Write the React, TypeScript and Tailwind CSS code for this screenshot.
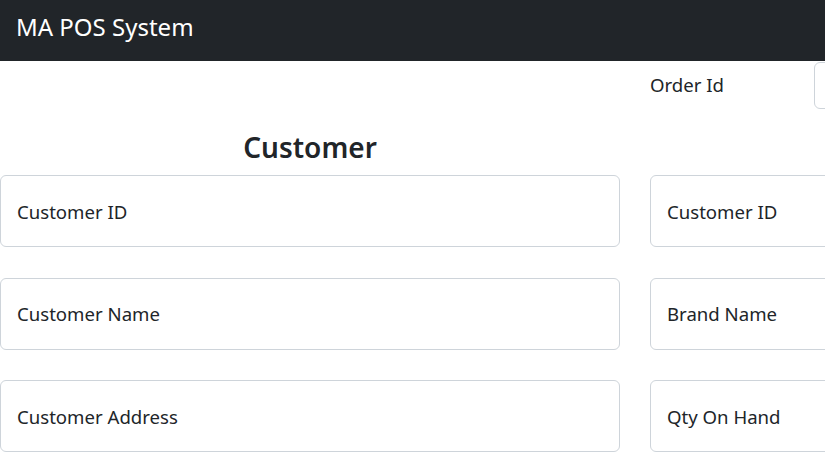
import React from "react";

const font = { fontFamily: '"Noto Sans", "Open Sans", sans-serif' };

function Field({ placeholder }: { placeholder: string }) {
  return (
    <input
      placeholder={placeholder}
      className="h-[72px] w-full rounded-[6px] border border-[#ced4da] bg-white px-4 text-[18.6px] text-[#212529] outline-none placeholder:text-[#212529]"
    />
  );
}

export default function App() {
  return (
    <div className="h-screen w-screen overflow-hidden bg-white" style={font}>
      <nav className="flex h-[61px] items-center bg-[#212529] px-4 pb-[7px]">
        <span className="text-[24px] text-white">MA POS System</span>
      </nav>

      <div className="grid w-[1270px] grid-cols-[620px_620px] gap-x-[30px]">
        <div />
        <div className="flex h-[48px] items-center">
          <label className="w-[164px] text-[18.6px] text-[#212529]">Order Id</label>
          <input className="mt-px h-[47px] flex-1 rounded-[6px] border border-[#ced4da] px-3 outline-none" />
        </div>

        <section className="flex flex-col">
          <h2 className="mt-[21px] mb-[11px] text-center text-[28px] leading-[34px] font-semibold text-[#212529]">
            Customer
          </h2>
          <div className="flex flex-col gap-[30.5px]">
            <Field placeholder="Customer ID" />
            <Field placeholder="Customer Name" />
            <Field placeholder="Customer Address" />
          </div>
        </section>

        <section className="flex flex-col">
          <div className="mt-[21px] mb-[11px] h-[34px]" />
          <div className="flex flex-col gap-[30.5px]">
            <Field placeholder="Customer ID" />
            <Field placeholder="Brand Name" />
            <Field placeholder="Qty On Hand" />
          </div>
        </section>
      </div>
    </div>
  );
}
